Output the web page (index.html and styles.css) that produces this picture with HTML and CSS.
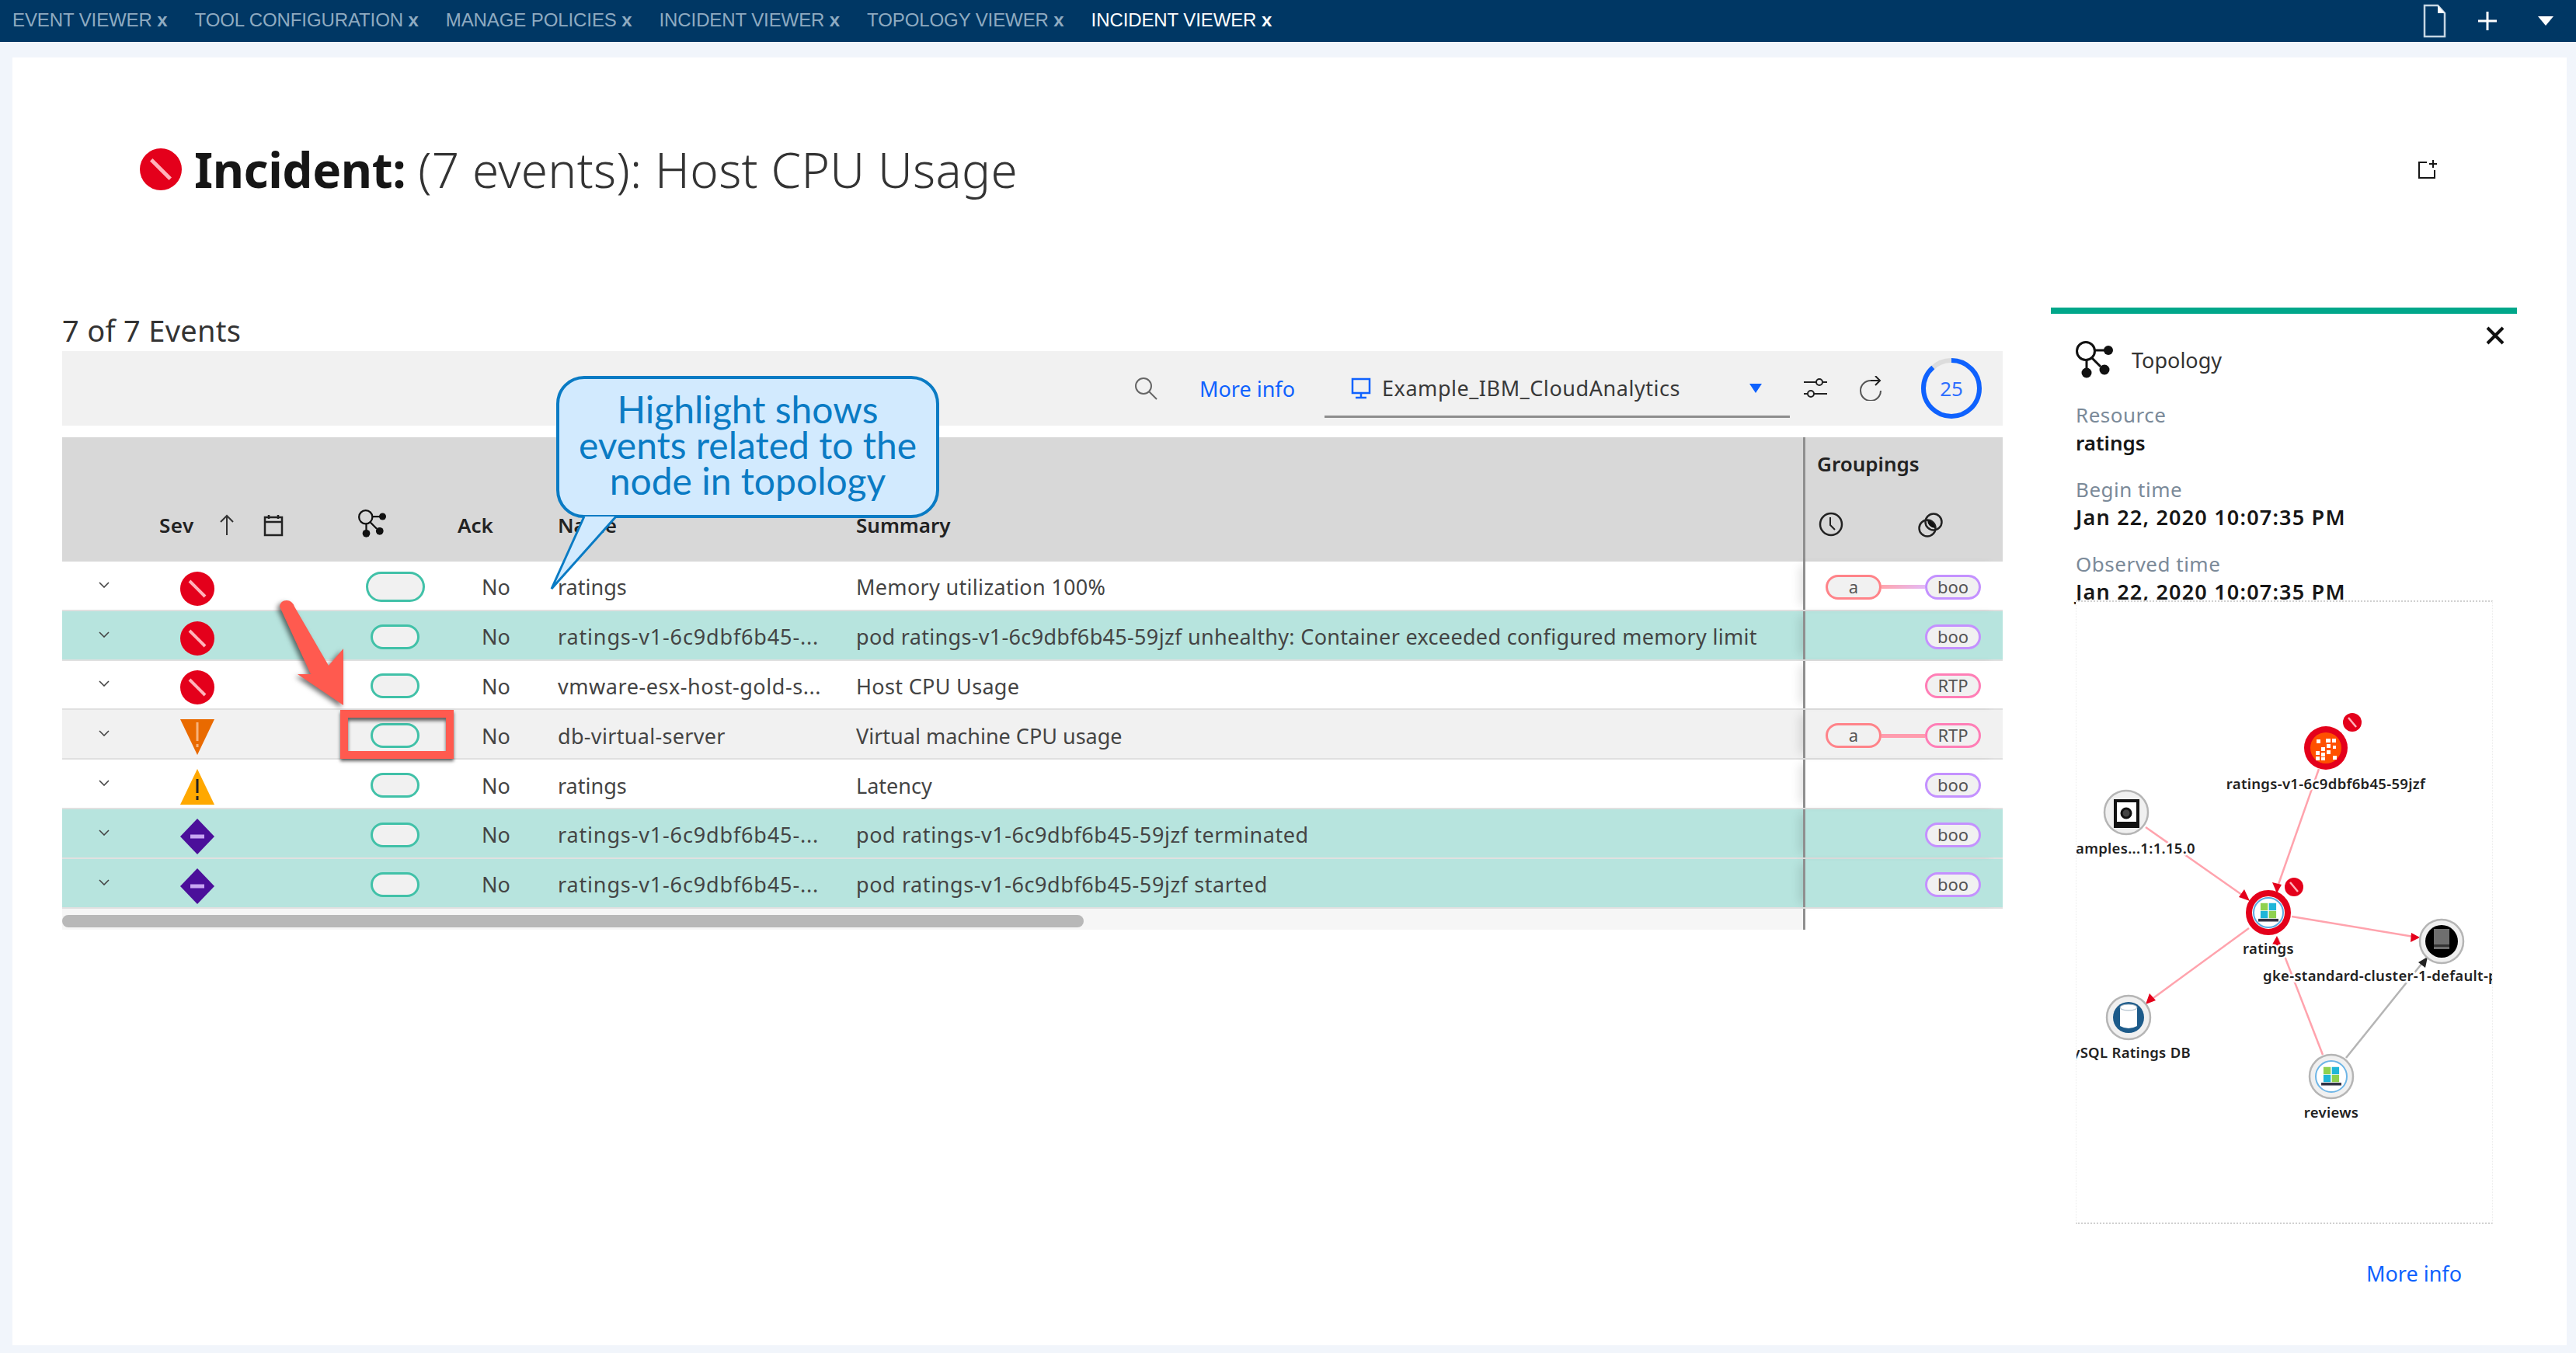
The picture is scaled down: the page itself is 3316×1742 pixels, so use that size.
FILE: index.html
```html
<!DOCTYPE html>
<html lang="en">
<head>
	<meta charset="UTF-8">
	<title>Incident viewer</title>
	<link rel="stylesheet" href="styles.css">
</head>
<body>
	<svg class="icon-defs" width="0" height="0">
		<symbol id="i-critical" viewBox="0 0 44 44">
			<circle cx="22" cy="22" r="22" fill="#e4001b"/>
			<path d="M12 12L32 32" stroke="#ffb3bb" stroke-width="4"/>
		</symbol>
		<symbol id="i-major" viewBox="0 0 44 46">
			<path d="M0 0H44L22 46Z" fill="#e96a00"/>
			<path d="M22 4V28M22 32V36" stroke="#f7b27a" stroke-width="3"/>
		</symbol>
		<symbol id="i-minor" viewBox="0 0 44 46">
			<path d="M22 0L44 46H0Z" fill="#ffa800"/>
			<path d="M22 13V31M22 35V40" stroke="#222" stroke-width="3"/>
		</symbol>
		<symbol id="i-info" viewBox="0 0 44 46">
			<path d="M22 0L44 23L22 46L0 23Z" fill="#4b0f9a"/>
			<path d="M13 23H31" stroke="#c9a6f2" stroke-width="5"/>
		</symbol>
		<symbol id="i-topology" viewBox="0 0 48 48">
			<g fill="none" stroke="#111" stroke-width="3">
				<circle cx="13" cy="13" r="11.5"/>
				<path d="M25 12H38M14 25V38M21 22L32 33"/>
			</g>
			<circle cx="42" cy="12" r="6" fill="#111"/>
			<circle cx="14" cy="41" r="6.5" fill="#111"/>
			<circle cx="37" cy="37" r="6.5" fill="#111"/>
		</symbol>
		<symbol id="i-chevron" viewBox="0 0 14 8">
			<path d="M1 1L7 7L13 1" fill="none" stroke="#444" stroke-width="1.6"/>
		</symbol>
	</svg>

	<header class="topbar">
		<nav class="tabs">
			<span class="tab">EVENT VIEWER <b>x</b></span>
			<span class="tab">TOOL CONFIGURATION <b>x</b></span>
			<span class="tab">MANAGE POLICIES <b>x</b></span>
			<span class="tab">INCIDENT VIEWER <b>x</b></span>
			<span class="tab">TOPOLOGY VIEWER <b>x</b></span>
			<span class="tab tab-active">INCIDENT VIEWER <b>x</b></span>
		</nav>
		<div class="topbar-tools">
			<svg class="tool-file" width="30" height="44" viewBox="0 0 30 44"><path d="M2 2H19L28 12V42H2Z" fill="none" stroke="#c5d5e2" stroke-width="2.5"/><path d="M19 2L28 12H19Z" fill="#fff"/></svg>
			<svg class="tool-plus" width="26" height="26" viewBox="0 0 26 26"><path d="M13 1V25M1 13H25" stroke="#fff" stroke-width="3"/></svg>
			<svg class="tool-caret" width="20" height="12" viewBox="0 0 20 12"><path d="M0 0H20L10 12Z" fill="#fff"/></svg>
		</div>
	</header>

	<main class="page">
		<div class="page-head">
			<h1 class="title">
				<svg class="title-icon"><use href="#i-critical"/></svg>
				<strong>Incident:</strong> <span>(7 events): Host CPU Usage</span>
			</h1>
			<svg class="expand" width="26" height="26" viewBox="0 0 26 26"><path d="M12 4H2V24H22V14" fill="none" stroke="#161616" stroke-width="2"/><path d="M20 1V11M15 6H25" stroke="#161616" stroke-width="2"/></svg>
		</div>

		<div class="content">
			<section class="events">
				<div class="count">7 of 7 Events</div>

				<div class="toolbar">
					<svg class="tb-search" width="30" height="30" viewBox="0 0 30 30"><circle cx="12" cy="12" r="10" fill="none" stroke="#666" stroke-width="2"/><path d="M19 19L29 29" stroke="#666" stroke-width="2"/></svg>
					<a class="link tb-more">More info</a>
					<div class="select">
						<svg width="26" height="28" viewBox="0 0 26 28"><path d="M2 2H24V20H2ZM13 20V26M6 26H20" fill="none" stroke="#0f62fe" stroke-width="2.5"/></svg>
						<span class="select-text">Example_IBM_CloudAnalytics</span>
						<svg class="select-caret" width="16" height="12" viewBox="0 0 16 12"><path d="M0 0H16L8 12Z" fill="#0f62fe"/></svg>
					</div>
					<svg class="tb-sliders" width="30" height="30" viewBox="0 0 30 30"><g fill="none" stroke="#222" stroke-width="2"><path d="M0 7H16M24 7H30M0 22H5M13 22H30"/><circle cx="20" cy="7" r="4"/><circle cx="9" cy="22" r="4"/></g></svg>
					<svg class="tb-refresh" width="30" height="32" viewBox="0 0 30 32"><path d="M15 6A13 13 0 1 0 28 19" fill="none" stroke="#555" stroke-width="2"/><path d="M15 6H27M21 0L27 6L21 12" fill="none" stroke="#222" stroke-width="2"/></svg>
					<div class="timer">
						<svg width="78" height="78" viewBox="0 0 78 78"><circle cx="39" cy="39" r="36" fill="none" stroke="#dcdcdc" stroke-width="6"/><circle cx="39" cy="39" r="36" fill="none" stroke="#0f62fe" stroke-width="6" stroke-dasharray="200 226" transform="rotate(-90 39 39)"/></svg>
						<span class="timer-num">25</span>
					</div>
				</div>

				<div class="table">
					<div class="row row-head">
						<div class="cell"></div>
						<div class="cell head-sev">Sev
							<svg class="head-arrow" width="20" height="28" viewBox="0 0 20 28"><path d="M10 27V2M2 10L10 2L18 10" fill="none" stroke="#333" stroke-width="2"/></svg>
							<svg width="28" height="30" viewBox="0 0 28 30"><path d="M3 5H25V28H3ZM3 11H25M8 2V7M20 2V7" fill="none" stroke="#222" stroke-width="2.5"/></svg>
						</div>
						<div class="cell"><svg class="head-topo"><use href="#i-topology"/></svg></div>
						<div class="cell head-ack">Ack</div>
						<div class="cell">Name</div>
						<div class="cell">Summary</div>
						<div class="cell group-head">
							<div class="group-title">Groupings</div>
							<div class="group-icons">
								<svg width="32" height="32" viewBox="0 0 32 32"><circle cx="16" cy="16" r="14" fill="none" stroke="#222" stroke-width="2.5"/><path d="M15 7V17L21 23" fill="none" stroke="#222" stroke-width="2"/></svg>
								<svg width="34" height="34" viewBox="0 0 34 34"><g fill="none" stroke="#222" stroke-width="2.5"><circle cx="13" cy="21" r="10.5"/><circle cx="21" cy="13" r="10.5"/></g><path d="M13 11A10.5 10.5 0 0 1 23 21A10.5 10.5 0 0 1 13 11Z" fill="#111"/></svg>
							</div>
						</div>
					</div>

					<div class="row">
						<div class="cell"><svg class="chevron"><use href="#i-chevron"/></svg></div>
						<div class="cell"><svg class="sev"><use href="#i-critical"/></svg></div>
						<div class="cell"><span class="topo-pill topo-pill-on"></span></div>
						<div class="cell cell-ack">No</div>
						<div class="cell">ratings</div>
						<div class="cell cell-sum">Memory utilization 100%</div>
						<div class="cell group"><span class="tag tag-a">a</span><span class="tag-line tag-line-boo"></span><span class="tag tag-boo">boo</span></div>
					</div>
					<div class="row row-match">
						<div class="cell"><svg class="chevron"><use href="#i-chevron"/></svg></div>
						<div class="cell"><svg class="sev"><use href="#i-critical"/></svg></div>
						<div class="cell"><span class="topo-pill"></span></div>
						<div class="cell cell-ack">No</div>
						<div class="cell cell-trunc">ratings-v1-6c9dbf6b45-...</div>
						<div class="cell cell-sum">pod ratings-v1-6c9dbf6b45-59jzf unhealthy: Container exceeded configured memory limit</div>
						<div class="cell group"><span class="tag tag-boo">boo</span></div>
					</div>
					<div class="row">
						<div class="cell"><svg class="chevron"><use href="#i-chevron"/></svg></div>
						<div class="cell"><svg class="sev"><use href="#i-critical"/></svg></div>
						<div class="cell"><span class="topo-pill"></span></div>
						<div class="cell cell-ack">No</div>
						<div class="cell cell-host">vmware-esx-host-gold-s...</div>
						<div class="cell cell-sum">Host CPU Usage</div>
						<div class="cell group"><span class="tag tag-rtp">RTP</span></div>
					</div>
					<div class="row row-hover">
						<div class="cell"><svg class="chevron"><use href="#i-chevron"/></svg></div>
						<div class="cell"><svg class="sev"><use href="#i-major"/></svg></div>
						<div class="cell"><span class="topo-pill"></span></div>
						<div class="cell cell-ack">No</div>
						<div class="cell cell-sum">db-virtual-server</div>
						<div class="cell">Virtual machine CPU usage</div>
						<div class="cell group"><span class="tag tag-a">a</span><span class="tag-line tag-line-rtp"></span><span class="tag tag-rtp">RTP</span></div>
					</div>
					<div class="row">
						<div class="cell"><svg class="chevron"><use href="#i-chevron"/></svg></div>
						<div class="cell"><svg class="sev"><use href="#i-minor"/></svg></div>
						<div class="cell"><span class="topo-pill"></span></div>
						<div class="cell cell-ack">No</div>
						<div class="cell">ratings</div>
						<div class="cell">Latency</div>
						<div class="cell group"><span class="tag tag-boo">boo</span></div>
					</div>
					<div class="row row-match">
						<div class="cell"><svg class="chevron"><use href="#i-chevron"/></svg></div>
						<div class="cell"><svg class="sev"><use href="#i-info"/></svg></div>
						<div class="cell"><span class="topo-pill"></span></div>
						<div class="cell cell-ack">No</div>
						<div class="cell cell-trunc">ratings-v1-6c9dbf6b45-...</div>
						<div class="cell cell-pod">pod ratings-v1-6c9dbf6b45-59jzf terminated</div>
						<div class="cell group"><span class="tag tag-boo">boo</span></div>
					</div>
					<div class="row row-match">
						<div class="cell"><svg class="chevron"><use href="#i-chevron"/></svg></div>
						<div class="cell"><svg class="sev"><use href="#i-info"/></svg></div>
						<div class="cell"><span class="topo-pill"></span></div>
						<div class="cell cell-ack">No</div>
						<div class="cell cell-trunc">ratings-v1-6c9dbf6b45-...</div>
						<div class="cell cell-pod">pod ratings-v1-6c9dbf6b45-59jzf started</div>
						<div class="cell group"><span class="tag tag-boo">boo</span></div>
					</div>

					<div class="scroll">
						<div class="scroll-track"><div class="scroll-thumb"></div></div>
						<div class="scroll-end"></div>
					</div>
				</div>

				<!-- annotations pasted over the table -->
				<div class="callout">
					Highlight shows<br>events related to the<br>node in topology
					<svg class="callout-tail" width="90" height="100" viewBox="0 0 90 100"><path d="M44 2L2 95L85 2" fill="#d2eafe" stroke="#0a7bc4" stroke-width="3"/></svg>
				</div>
				<svg class="red-arrow" width="120" height="170" viewBox="340 760 120 170"><path d="M357 781Q358 773 366 773Q373 773 376 781L420 857L439 835V908L380 868L397 868Z" fill="#ff5a4f"/></svg>
				<div class="red-box"></div>
			</section>

			<aside class="side">
				<svg class="side-close" width="26" height="26" viewBox="0 0 26 26"><path d="M3 3L23 23M23 3L3 23" stroke="#111" stroke-width="4"/></svg>
				<div class="side-head">
					<svg class="side-icon"><use href="#i-topology"/></svg>
					<span>Topology</span>
				</div>
				<dl class="facts">
					<dt>Resource</dt>
					<dd>ratings</dd>
					<dt>Begin time</dt>
					<dd class="fact-date">Jan 22, 2020 10:07:35 PM</dd>
					<dt>Observed time</dt>
					<dd class="fact-date">Jan 22, 2020 10:07:35 PM</dd>
				</dl>
				<div class="graph">
					<svg width="535" height="799" viewBox="2673 775 535 799">
						<defs>
							<g id="tile">
								<rect x="-14" y="-17" width="13" height="13" fill="#8fd14f"/>
								<rect x="1" y="-17" width="13" height="13" fill="#1fb6d9"/>
								<rect x="-14" y="-3" width="13" height="13" fill="#1fb6d9"/>
								<rect x="1" y="-3" width="13" height="13" fill="#8fd14f"/>
								<rect x="-18" y="11" width="36" height="5" fill="#334"/>
							</g>
							<g id="badge">
								<circle r="12" fill="#e4001b"/>
								<path d="M-5 -6L5 6" stroke="#ffb3bb" stroke-width="2.5"/>
							</g>
						</defs>

						<!-- edges -->
						<g fill="none" stroke="#ffa3ad" stroke-width="2.5">
							<path d="M2762 1065L2893 1157"/>
							<path d="M2985 990L2930 1147"/>
							<path d="M2950 1180L3113 1207"/>
							<path d="M2895 1195L2765 1290"/>
							<path d="M2990 1358L2932 1208"/>
						</g>
						<path d="M3020 1362L3122 1235" fill="none" stroke="#b5b5b5" stroke-width="2.5"/>
						<g fill="#e4001b">
							<path d="M2896 1160L2882 1155L2889 1145Z"/>
							<path d="M2931 1150L2925 1136L2937 1139Z"/>
							<path d="M3115 1207L3103 1213L3104 1201Z"/>
							<path d="M2762 1293L2767 1279L2775 1288Z"/>
							<path d="M2931 1205L2937 1219L2925 1216Z"/>
						</g>
						<path d="M3125 1232L3122 1246L3113 1239Z" fill="#222"/>

						<!-- nodes -->
						<circle cx="2994" cy="963" r="28" fill="#e4001b"/>
						<circle cx="2994" cy="963" r="20" fill="#ff5000"/>
						<g fill="#fff">
							<rect x="2982" y="952" width="5" height="5"/><rect x="2994" y="951" width="6" height="5"/><rect x="3002" y="951" width="5" height="5"/>
							<rect x="2995" y="958" width="5" height="5"/><rect x="3003" y="960" width="4" height="4"/><rect x="2988" y="962" width="5" height="5"/>
							<rect x="2981" y="967" width="5" height="5"/><rect x="2988" y="969" width="5" height="5"/><rect x="2995" y="966" width="5" height="5"/>
							<rect x="2981" y="974" width="5" height="5"/><rect x="2988" y="975" width="5" height="4"/><rect x="3003" y="973" width="5" height="5"/>
						</g>
						<use href="#badge" x="3028" y="930"/>

						<circle cx="2737" cy="1046" r="28" fill="#f0f0f0" stroke="#b5b5b5" stroke-width="2.5"/>
						<path d="M2723 1031H2752V1064H2723Z" fill="#fff" stroke="#111" stroke-width="4"/>
						<circle cx="2737" cy="1047" r="6" fill="#444" stroke="#111" stroke-width="3"/>
						<path d="M2725 1060H2750" stroke="#111" stroke-width="4"/>

						<circle cx="2920" cy="1175" r="25" fill="#fff" stroke="#e4001b" stroke-width="8"/>
						<circle cx="2920" cy="1175" r="19" fill="none" stroke="#5aa9e0" stroke-width="2"/>
						<use href="#tile" x="2920" y="1175" transform="translate(2920 1175) scale(.72) translate(-2920 -1175)"/>
						<use href="#badge" x="2953" y="1142"/>

						<circle cx="3143" cy="1212" r="28" fill="#f0f0f0" stroke="#b5b5b5" stroke-width="2.5"/>
						<circle cx="3143" cy="1212" r="21" fill="#000"/>
						<rect x="3133" y="1196" width="20" height="26" fill="#6f6f6f"/>
						<rect x="3133" y="1216" width="20" height="3" fill="#333"/>

						<circle cx="2740" cy="1310" r="28" fill="#f0f0f0" stroke="#b5b5b5" stroke-width="2.5"/>
						<circle cx="2740" cy="1310" r="20" fill="#1d5b8a"/>
						<path d="M2729 1297H2751V1321Q2740 1327 2729 1321Z" fill="#fff"/>
						<ellipse cx="2740" cy="1297" rx="11" ry="4" fill="#fff" stroke="#9fb2c0" stroke-width="1"/>

						<circle cx="3001" cy="1386" r="28" fill="#f0f0f0" stroke="#b5b5b5" stroke-width="2.5"/>
						<circle cx="3001" cy="1386" r="20" fill="#fff" stroke="#6db5e6" stroke-width="2"/>
						<use href="#tile" x="3001" y="1386" transform="translate(3001 1386) scale(.72) translate(-3001 -1386)"/>

						<!-- labels -->
						<g class="graph-label">
							<text x="2994" y="1016" text-anchor="middle">ratings-v1-6c9dbf6b45-59jzf</text>
							<text x="2826" y="1099" text-anchor="end">examples...1:1.15.0</text>
							<text x="2920" y="1228" text-anchor="middle">ratings</text>
							<text x="2913" y="1263">gke-standard-cluster-1-default-pool</text>
							<text x="2820" y="1362" text-anchor="end">MySQL Ratings DB</text>
							<text x="3001" y="1439" text-anchor="middle">reviews</text>
						</g>
					</svg>
				</div>
				<a class="link side-more">More info</a>
			</aside>
		</div>
	</main>
</body>
</html>
```

FILE: styles.css
```css
*{
	margin: 0;
	padding: 0;
	box-sizing: border-box;
}
html,body{
	width: 3316px;
	height: 1742px;
	overflow: hidden;
	background: #f1f5fb;
	font-family: "Noto Sans", sans-serif;
	color: #161616;
}
svg{
	display: block;
	flex: none;
}
.icon-defs{
	position: absolute;
}

/* top bar */
.topbar{
	display: flex;
	align-items: center;
	justify-content: space-between;
	height: 54px;
	padding: 0 29px 0 16px;
	background: #003764;
}
.tabs{
	display: flex;
	gap: 35px;
	padding-bottom: 3px;
}
.tab{
	font-family: "Liberation Sans", sans-serif;
	font-size: 24px;
	letter-spacing: -0.1px;
	color: #8fabc1;
	white-space: nowrap;
}
.tab b{
	font-size: 24px;
}
.tab-active{
	color: #fff;
}
.topbar-tools{
	display: flex;
	align-items: center;
}
.tool-plus{
	margin-left: 40px;
}
.tool-caret{
	margin-left: 52px;
}

/* page */
.page{
	height: 1658px;
	margin: 20px 12px 0 16px;
	background: #fff;
}
.page-head{
	display: flex;
	align-items: center;
	justify-content: space-between;
	padding: 104px 166px 0 164px;
}
.title{
	display: flex;
	align-items: center;
	gap: 16px;
	font-size: 62px;
	line-height: 80px;
	font-weight: 300;
	color: #333;
}
.title strong{
	font-weight: 700;
	letter-spacing: -0.4px;
	color: #161616;
}
.title span{
	letter-spacing: 0.35px;
}
.title-icon{
	width: 54px;
	height: 54px;
}
.content{
	display: flex;
	gap: 62px;
	margin: 138px 0 0 64px;
}

/* events */
.events{
	position: relative;
	width: 2498px;
}
.count{
	padding: 11px 0 9px;
	font-size: 38px;
	line-height: 36px;
	letter-spacing: 0.3px;
	color: #333;
}
.toolbar{
	display: flex;
	align-items: center;
	justify-content: flex-end;
	height: 96px;
	padding-right: 27px;
	margin-bottom: 15px;
	background: #f1f1f1;
}
.link{
	color: #0f62fe;
	font-size: 27px;
}
.tb-more{
	margin: 0 38px 0 54px;
}
.select{
	display: flex;
	align-items: center;
	gap: 14px;
	width: 599px;
	height: 76px;
	padding: 2px 36px 0 34px;
	border-bottom: 3px solid #8d8d8d;
}
.select-text{
	font-size: 27px;
	letter-spacing: 0.55px;
	color: #393939;
}
.select-caret{
	margin-left: auto;
}
.tb-sliders{
	margin-left: 18px;
}
.tb-refresh{
	margin-left: 41px;
}
.timer{
	position: relative;
	display: flex;
	align-items: center;
	justify-content: center;
	width: 78px;
	height: 78px;
	margin-left: 50px;
}
.timer svg{
	position: absolute;
	top: 0;
	left: 0;
}
.timer-num{
	color: #2f6fff;
	font-size: 26px;
}

/* table */
.row{
	display: grid;
	grid-template-columns: 125px 235px 152px 126px 384px 1219px 257px;
	height: 63.8px;
	align-items: center;
	border-bottom: 2px solid #e0e0e0;
	font-size: 27px;
	color: #444;
	white-space: nowrap;
}
.row-head{
	height: 160px;
	align-items: end;
	border-bottom: 0;
	background: #d8d8d8;
	font-size: 26px;
	font-weight: 600;
	color: #222;
}
.row-head .cell{
	padding-top: 0;
	padding-bottom: 31px;
	line-height: 32px;
}
.row-match{
	background: #b7e4de;
}
.row-hover{
	background: #f1f1f1;
}
.cell{
	min-width: 0;
	padding-top: 4px;
}
.cell-ack{
	padding-left: 28px;
}
.cell-sum{
	letter-spacing: 0.32px;
}
.cell-pod{
	letter-spacing: 0.58px;
}
.cell-trunc{
	letter-spacing: 0.85px;
}
.cell-host{
	letter-spacing: 0.55px;
}
.head-ack{
	margin-left: -3px;
}
.head-sev{
	display: flex;
	align-items: center;
	letter-spacing: 0.5px;
}
.head-arrow{
	margin: 0 36px 0 32px;
}
.head-topo{
	display: block;
	width: 36px;
	height: 36px;
	margin-left: 21px;
}
.group-head{
	align-self: stretch;
	display: flex;
	flex-direction: column;
	justify-content: space-between;
	padding: 18px 0 30px 15px;
	border-left: 3px solid #8f8f8f;
}
.row-head .group-head{
	padding-top: 18px;
	padding-bottom: 30px;
}
.group-icons{
	display: flex;
	gap: 95px;
	padding-left: 2px;
}
.chevron{
	width: 14px;
	height: 8px;
	margin: -6px 0 0 47px;
}
.sev{
	width: 44px;
	height: 46px;
	margin: 4px 0 0 27px;
}
.topo-pill{
	display: block;
	width: 63px;
	height: 32px;
	margin-left: 37px;
	border: 3px solid #41c1a8;
	border-radius: 16px;
	background: #f1f1f1;
}
.topo-pill-on{
	width: 76px;
	height: 39px;
	margin-left: 31px;
	border-radius: 20px;
}
.group{
	align-self: stretch;
	display: flex;
	align-items: center;
	justify-content: flex-end;
	padding: 4px 28px 0 26px;
	border-left: 3px solid #8f8f8f;
	box-shadow: -10px 0 12px -6px rgba(0,0,0,.12);
}
.tag{
	width: 72px;
	height: 32px;
	border: 3px solid;
	border-radius: 16px;
	background: #f1f1f1;
	font-size: 22px;
	line-height: 25px;
	text-align: center;
	color: #555;
}
.tag-a{
	border-color: #ff8389;
}
.tag-boo{
	border-color: #c491ff;
}
.tag-rtp{
	border-color: #ff7eb6;
}
.tag-line{
	flex: 1;
	height: 5px;
}
.tag-line-boo{
	background: linear-gradient(90deg, #ffa6ae, #e4b9f5);
}
.tag-line-rtp{
	background: #ff9cae;
}
.scroll{
	display: grid;
	grid-template-columns: 2241px 257px;
	height: 27px;
}
.scroll-track{
	padding-top: 8px;
	background: #f6f6f6;
}
.scroll-thumb{
	width: 1315px;
	height: 16px;
	border-radius: 8px;
	background: #b8b8b8;
}
.scroll-end{
	border-left: 3px solid #8f8f8f;
}

/* annotations */
.callout{
	position: absolute;
	left: 636px;
	top: 88px;
	width: 493px;
	height: 183px;
	padding-top: 16px;
	border: 4px solid #0a7bc4;
	border-radius: 36px;
	background: #d2eafe;
	font-family: Lato, sans-serif;
	font-size: 48px;
	line-height: 46px;
	text-align: center;
	color: #0a7bc4;
}
.callout-tail{
	position: absolute;
	left: -12px;
	top: 175px;
}
.red-arrow{
	position: absolute;
	left: 263px;
	top: 364px;
	filter: drop-shadow(-3px 3px 3px rgba(0,0,0,.55));
}
.red-box{
	position: absolute;
	left: 358px;
	top: 518px;
	width: 146px;
	height: 63px;
	border: 10px solid #ff5a4f;
	box-shadow: 0 3px 4px rgba(0,0,0,.6), inset 0 4px 4px rgba(0,0,0,.6);
}

/* side panel */
.side{
	position: relative;
	width: 600px;
	padding-top: 36px;
	border-top: 8px solid #00a78a;
}
.side-close{
	position: absolute;
	top: 15px;
	left: 559px;
}
.side-head{
	display: flex;
	align-items: center;
	gap: 24px;
	height: 46px;
	padding-left: 32px;
	font-size: 27px;
	color: #333;
}
.side-icon{
	width: 48px;
	height: 48px;
}
.facts{
	margin: 30px 0 0 32px;
	font-size: 26px;
	line-height: 36px;
}
.facts dt{
	letter-spacing: 0.5px;
	color: #7b8a99;
}
.facts dd{
	margin-bottom: 24px;
	font-weight: 600;
	color: #161616;
}
.facts .fact-date{
	font-size: 27px;
	letter-spacing: 1.2px;
}
.graph{
	position: relative;
	width: 537px;
	height: 803px;
	margin: -31px 0 0 32px;
	border-style: dotted;
	border-color: #d0d0d0 #ececec;
	border-width: 2px 1px;
	background: #fff;
}
.graph-label text{
	font-size: 18.5px;
	font-weight: 600;
	letter-spacing: 0.3px;
	fill: #222;
	stroke: #fff;
	stroke-width: 5px;
	paint-order: stroke;
}
.side-more{
	display: block;
	margin-top: 44px;
	padding-right: 71px;
	line-height: 40px;
	text-align: right;
}
```
